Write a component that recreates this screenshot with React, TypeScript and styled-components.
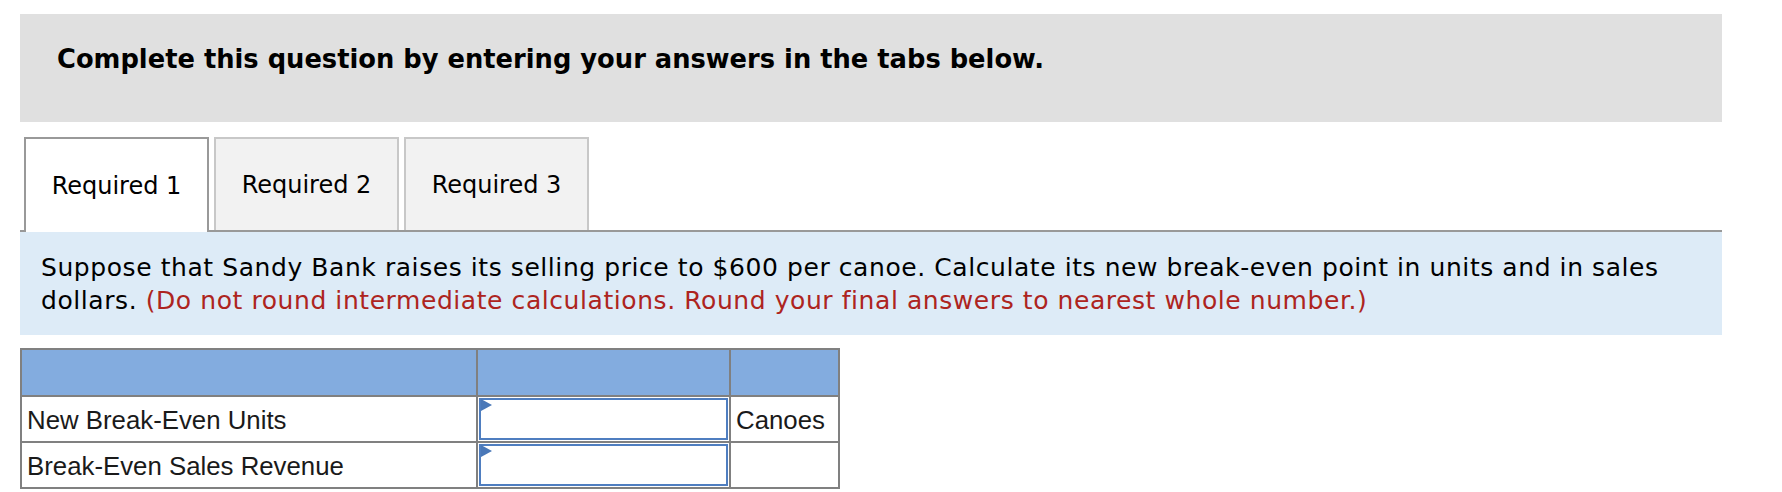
import styled, { createGlobalStyle } from 'styled-components';

// global
const GlobalStyle = createGlobalStyle`
  body {
    margin: 0;
    background: #ffffff;
    font-family: 'DejaVu Sans', Verdana, sans-serif;
    color: #000;
  }
`;

// style
const Page = styled.div`
  padding: 14px 0 0 20px;
  width: 1702px;
`;
const Banner = styled.div`
  height: 108px;
  background: #e0e0e0;
  padding: 30px 0 0 37px;
  box-sizing: border-box;
`;
const BannerText = styled.h1`
  margin: 0;
  font-size: 25.75px;
  font-weight: bold;
  line-height: 30px;
`;
const TabRow = styled.div`
  display: flex;
  align-items: flex-end;
  gap: 5px;
  margin: 15px 0 0 4px;
`;
const Tab = styled.div<{ active?: boolean }>`
  width: 185px;
  height: ${(p) => (p.active ? '95px' : '93px')};
  margin-bottom: ${(p) => (p.active ? '-2px' : '0')};
  box-sizing: border-box;
  display: flex;
  align-items: center;
  justify-content: center;
  border: 2px solid ${(p) => (p.active ? '#999999' : '#c8c8c8')};
  border-bottom: none;
  background: ${(p) => (p.active ? '#ffffff' : '#f2f2f2')};
  font-size: 24px;
  position: relative;
  z-index: 1;
`;
const Panel = styled.div`
  border-top: 2px solid #999999;
  background: #ddebf7;
  padding: 19px 20px 18px 21px;
  font-size: 25px;
  letter-spacing: 0.57px;
  line-height: 33px;
`;
const Note = styled.span`
  color: #ad2420;
`;
const Table = styled.table`
  margin-top: 13px;
  border-collapse: collapse;
  table-layout: fixed;
  width: 818px;
  font-family: 'Liberation Sans', Arial, sans-serif;
  font-size: 25.8px;
  color: #1a1a1a;
`;
const HeadCell = styled.th`
  height: 45px;
  background: #83acdf;
  border: 2px solid #808080;
  padding: 0;
`;
const Cell = styled.td`
  height: 41px;
  border: 2px solid #808080;
  padding: 2px 5px 0;
  white-space: nowrap;
  overflow: hidden;
`;
const InputCell = styled.td`
  height: 41px;
  border: 2px solid #808080;
  padding: 1px;
  position: relative;
`;
const Field = styled.input`
  display: block;
  width: 100%;
  height: 42px;
  box-sizing: border-box;
  border: 2px solid #4f7ec0;
  background: #fff;
  outline: none;
`;
const Flag = styled.svg`
  position: absolute;
  left: 3px;
  top: 2px;
`;

const rows = [
  { label: 'New Break-Even Units', unit: 'Canoes' },
  { label: 'Break-Even Sales Revenue', unit: '' },
];

function App() {
  return (
    <>
      <GlobalStyle />
      <Page>
        <Banner>
          <BannerText>
            Complete this question by entering your answers in the tabs below.
          </BannerText>
        </Banner>
        <TabRow>
          <Tab active>Required 1</Tab>
          <Tab>Required 2</Tab>
          <Tab>Required 3</Tab>
        </TabRow>
        <Panel>
          Suppose that Sandy Bank raises its selling price to $600 per canoe.
          Calculate its new break-even point in units and in sales dollars.{' '}
          <Note>
            (Do not round intermediate calculations. Round your final answers
            to nearest whole number.)
          </Note>
        </Panel>
        <Table>
          <colgroup>
            <col style={{ width: 456 }} />
            <col style={{ width: 253 }} />
            <col style={{ width: 109 }} />
          </colgroup>
          <thead>
            <tr>
              <HeadCell />
              <HeadCell />
              <HeadCell />
            </tr>
          </thead>
          <tbody>
            {rows.map((r) => (
              <tr key={r.label}>
                <Cell>{r.label}</Cell>
                <InputCell>
                  <Field type="text" />
                  <Flag width="11" height="12" viewBox="0 0 11 12">
                    <polygon points="0,0 11,6 0,12" fill="#4a78b8" />
                  </Flag>
                </InputCell>
                <Cell>{r.unit}</Cell>
              </tr>
            ))}
          </tbody>
        </Table>
      </Page>
    </>
  );
}

export default App;
